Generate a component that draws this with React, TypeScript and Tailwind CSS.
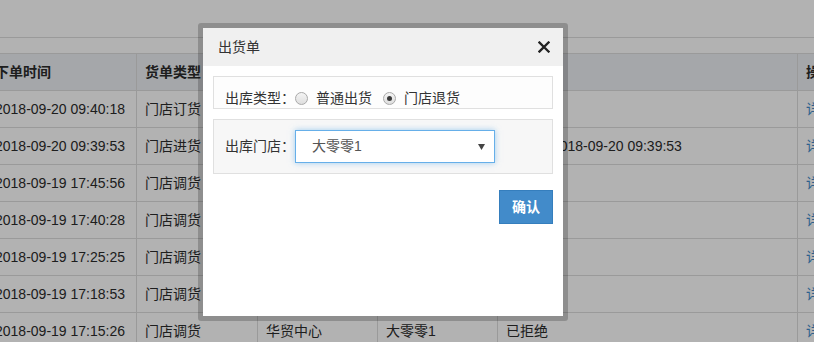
import { ChevronDown } from "lucide-react";

const FONT = { fontFamily: '"Liberation Sans", "Noto Sans CJK SC", sans-serif' };

interface Row {
  time: string;
  type: string;
  from: string;
  to: string;
  status: string;
}

const rows: Row[] = [
  { time: "2018-09-20 09:40:18", type: "门店订货", from: "华贸中心", to: "大零零1", status: "待审核" },
  { time: "2018-09-20 09:39:53", type: "门店进货", from: "华贸中心", to: "大零零1", status: "已发货 2018-09-20 09:39:53" },
  { time: "2018-09-19 17:45:56", type: "门店调货", from: "华贸中心", to: "大零零1", status: "已拒绝" },
  { time: "2018-09-19 17:40:28", type: "门店调货", from: "华贸中心", to: "大零零1", status: "已拒绝" },
  { time: "2018-09-19 17:25:25", type: "门店调货", from: "华贸中心", to: "大零零1", status: "已拒绝" },
  { time: "2018-09-19 17:18:53", type: "门店调货", from: "华贸中心", to: "大零零1", status: "已拒绝" },
  { time: "2018-09-19 17:15:26", type: "门店调货", from: "华贸中心", to: "大零零1", status: "已拒绝" },
];

function Radio({ checked }: { checked?: boolean }) {
  return (
    <span className="w-[13px] h-[13px] rounded-full border border-[#a9a9a9] bg-gradient-to-b from-[#f4f4f4] to-[#dedede] flex items-center justify-center shrink-0">
      {checked && <span className="w-[5px] h-[5px] rounded-full bg-[#3a3a3a]" />}
    </span>
  );
}

function Cells({ cells, head }: { cells: string[]; head?: boolean }) {
  const widths = ["w-[150px]", "w-[121px]", "w-[120px]", "w-[120px]", "w-[300px]", "w-[120px]"];
  return (
    <div className={`flex h-[37px] border-b border-[#dddddd] ${head ? "bg-[#ecf0f4] font-bold" : ""}`}>
      {cells.map((c, i) => (
        <div
          key={i}
          className={`${widths[i]} shrink-0 px-2 flex items-center border-r border-[#dddddd] whitespace-nowrap overflow-hidden ${
            i === 5 && !head ? "text-[#428bca]" : ""
          }`}
        >
          {c}
        </div>
      ))}
    </div>
  );
}

export default function App() {
  return (
    <div className="w-[814px] h-[342px] relative overflow-hidden bg-white text-[14px] text-[#2b2b2b]" style={FONT}>
      {/* page behind the dialog */}
      <div className="h-[38px] border-b border-[#dddddd]" />
      <div className="mt-[15px] ml-[-13px] border-t border-[#dddddd]">
        <Cells head cells={["下单时间", "货单类型", "发货门店", "收货门店", "状态", "操作"]} />
        {rows.map((r, i) => (
          <Cells key={i} cells={[r.time, r.type, r.from, r.to, r.status, "详情"]} />
        ))}
      </div>

      {/* overlay */}
      <div className="absolute inset-0 bg-black/30" />

      {/* dialog */}
      <div className="absolute left-[198px] top-[23px] border-[5px] border-black/20 rounded-[3px] bg-clip-padding">
        <div className="w-[360px] h-[288px] bg-white flex flex-col text-[#333]">
          <div className="h-[38px] bg-[#f0f0f0] flex items-center justify-between pl-[15px] pr-[13px] shrink-0">
            <span>出货单</span>
            <svg width="12" height="12" viewBox="0 0 12 12">
              <path d="M1.5 1.5 L10.5 10.5 M10.5 1.5 L1.5 10.5" stroke="#222" strokeWidth="2.3" strokeLinecap="square" />
            </svg>
          </div>

          <div className="px-[10px] pt-[10px] flex flex-col">
            <div className="h-[33px] border border-[#e0e0e0] bg-[#fdfdfd] flex items-center pl-[11px] pt-[12px]">
              <span>出库类型：</span>
              <Radio />
              <span className="ml-[8px]">普通出货</span>
              <span className="ml-[11px]"><Radio checked /></span>
              <span className="ml-[8px]">门店退货</span>
            </div>

            <div className="mt-[10px] h-[55px] border border-[#e0e0e0] bg-[#f7f7f7] flex items-center pl-[11px]">
              <span>出库门店：</span>
              <div className="w-[200px] h-[33px] bg-white border border-[#66afe9] shadow-[0_0_6px_rgba(102,175,233,0.6)] flex items-center justify-between pl-[16px] pr-[9px]">
                <span className="text-[#555]">大零零1</span>
                <svg width="7" height="6" viewBox="0 0 7 6">
                  <path d="M0 0 H7 L3.5 6 Z" fill="#444" />
                </svg>
              </div>
            </div>

            <div className="flex justify-end mt-[16px]">
              <button className="w-[54px] h-[34px] bg-[#428bca] border border-[#357ebd] text-white font-bold">
                确认
              </button>
            </div>
          </div>
        </div>
      </div>
    </div>
  );
}
